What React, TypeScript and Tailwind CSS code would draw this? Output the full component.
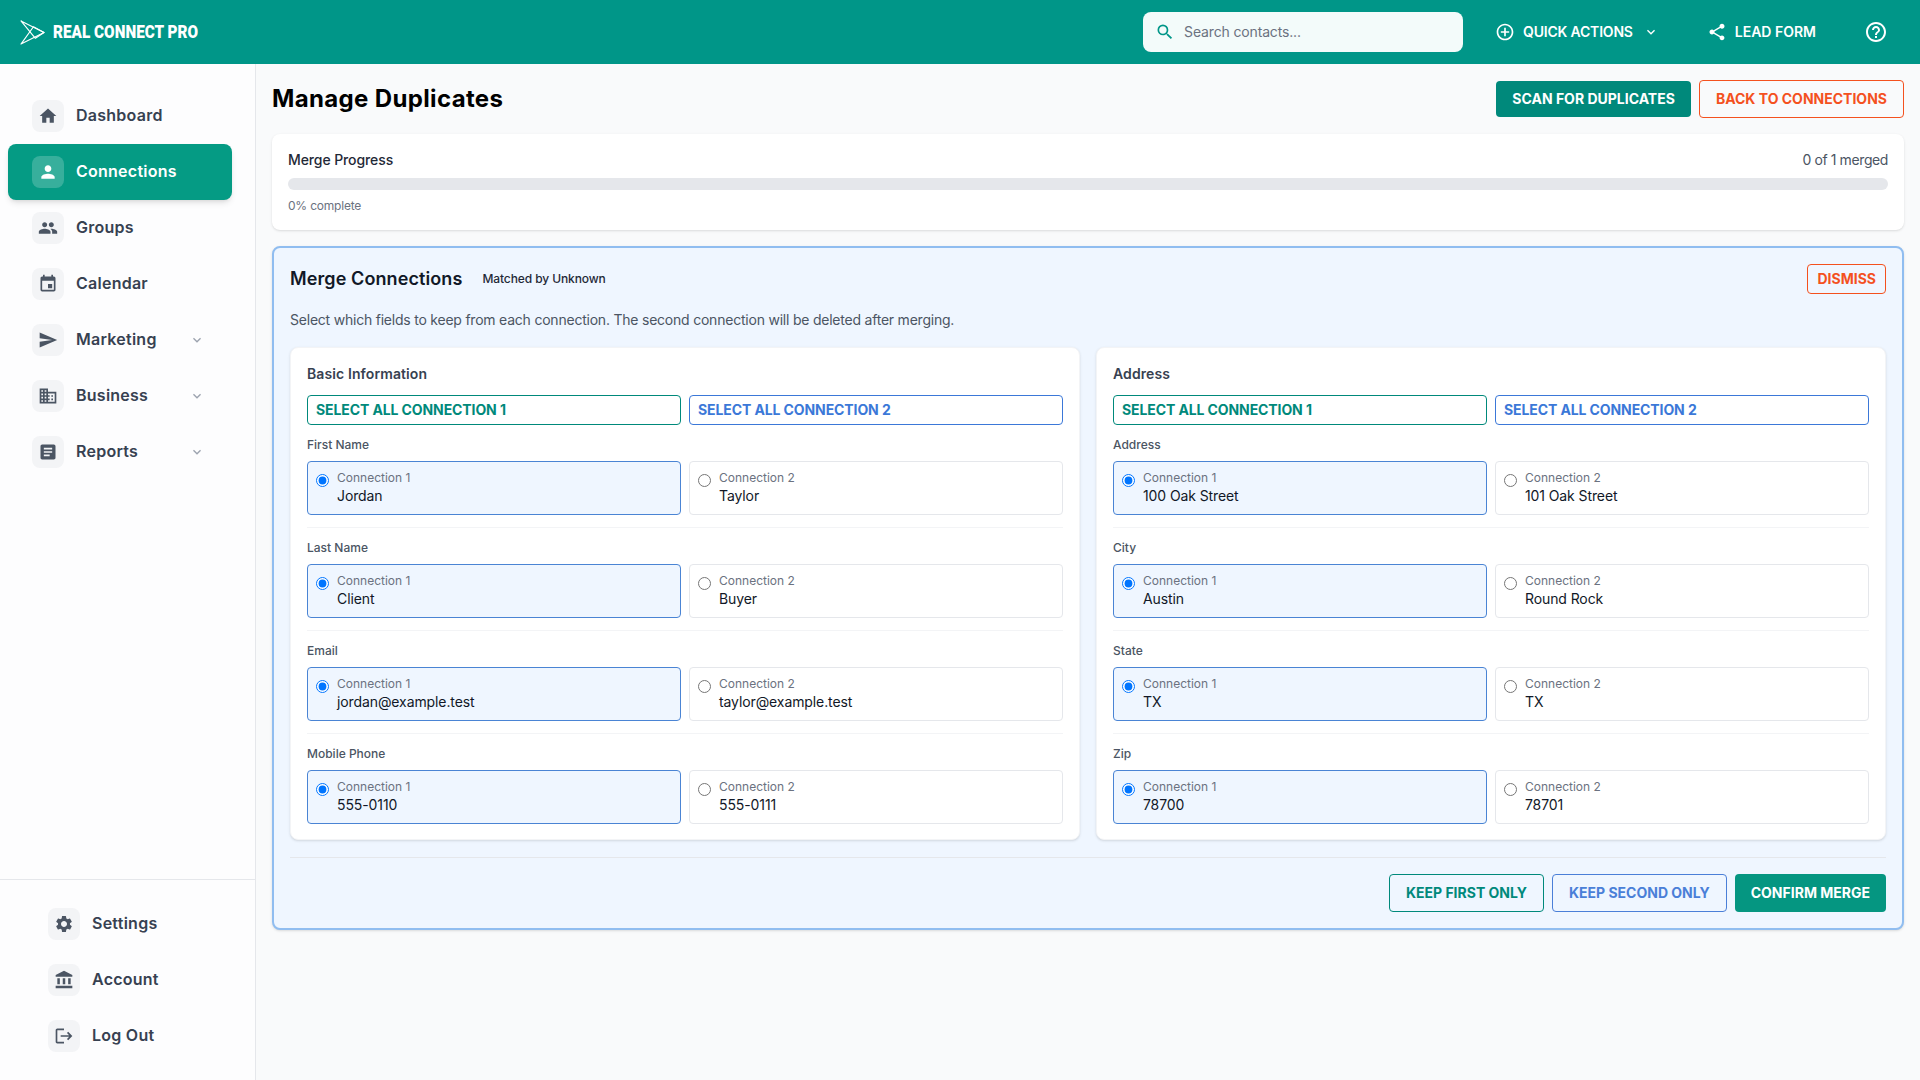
import {
  MdAccountBalance,
  MdAddCircleOutline,
  MdArticle,
  MdDomain,
  MdEvent,
  MdExpandMore,
  MdHelpOutline,
  MdHome,
  MdLogout,
  MdPeople,
  MdPerson,
  MdSearch,
  MdSend,
  MdSettings,
  MdShare,
} from "react-icons/md";
import type { IconType } from "react-icons";

const font = "font-['Inter',sans-serif]";

const mainNav: { label: string; icon: IconType; active?: boolean; more?: boolean }[] = [
  { label: "Dashboard", icon: MdHome },
  { label: "Connections", icon: MdPerson, active: true },
  { label: "Groups", icon: MdPeople },
  { label: "Calendar", icon: MdEvent },
  { label: "Marketing", icon: MdSend, more: true },
  { label: "Business", icon: MdDomain, more: true },
  { label: "Reports", icon: MdArticle, more: true },
];

const bottomNav: { label: string; icon: IconType }[] = [
  { label: "Settings", icon: MdSettings },
  { label: "Account", icon: MdAccountBalance },
  { label: "Log Out", icon: MdLogout },
];

const sections = [
  {
    title: "Basic Information",
    fields: [
      { label: "First Name", first: "Jordan", second: "Taylor" },
      { label: "Last Name", first: "Client", second: "Buyer" },
      { label: "Email", first: "jordan@example.test", second: "taylor@example.test" },
      { label: "Mobile Phone", first: "555-0110", second: "555-0111" },
    ],
  },
  {
    title: "Address",
    fields: [
      { label: "Address", first: "100 Oak Street", second: "101 Oak Street" },
      { label: "City", first: "Austin", second: "Round Rock" },
      { label: "State", first: "TX", second: "TX" },
      { label: "Zip", first: "78700", second: "78701" },
    ],
  },
];

function Logo() {
  return (
    <svg width="25" height="25" viewBox="0 0 26 26" fill="none" stroke="white" strokeWidth="1.2" strokeLinejoin="round">
      <path d="M1 1 L25 13 L16 19 Z" />
      <path d="M1 25 L25 13 L14 7 Z" />
    </svg>
  );
}

function Option({ name, title, value, selected }: { name: string; title: string; value: string; selected?: boolean }) {
  return (
    <label
      className={
        selected
          ? "flex h-[54px] items-start rounded border border-[#4a84d4] bg-[#eff6ff] px-2 pt-2"
          : "flex h-[54px] items-start rounded border border-[#e5e7eb] bg-white px-2 pt-2"
      }
    >
      <input type="radio" name={name} defaultChecked={selected} className="mt-1 mr-2 h-[13px] w-[13px]" />
      <span className="flex flex-col">
        <span className="text-xs leading-4 text-[#6b7280]">{title}</span>
        <span className="text-sm leading-5 tracking-[-0.1px] text-[#111827]">{value}</span>
      </span>
    </label>
  );
}

export default function App() {
  return (
    <div className={`flex h-screen flex-col overflow-hidden bg-[#f9fafb] ${font}`}>
      {/* Header */}
      <header className="flex h-16 shrink-0 items-center bg-[#009688] pl-5 pr-8 text-white">
        <Logo />
        <span className="mb-0.5 ml-2 inline-block origin-left scale-x-[0.85] font-['Roboto',sans-serif] text-[18px] font-black uppercase">
          Real Connect Pro
        </span>
        <div className="ml-auto flex h-10 w-[320px] items-center gap-[9px] rounded-lg bg-[#f3fbfa] px-3 text-[#009688]">
          <MdSearch size={20} />
          <span className="text-sm tracking-[-0.15px] text-[#6b7280]">Search contacts...</span>
        </div>
        <div className="ml-8 flex items-center">
          <MdAddCircleOutline size={20} />
          <span className="ml-2 text-sm font-semibold uppercase tracking-[-0.2px]">Quick Actions</span>
          <MdExpandMore size={16} className="ml-2.5" />
        </div>
        <div className="ml-12 flex items-center">
          <MdShare size={20} />
          <span className="ml-2 text-sm font-semibold uppercase">Lead Form</span>
        </div>
        <MdHelpOutline size={24} className="ml-12" />
      </header>

      <div className="flex min-h-0 flex-1">
        {/* Sidebar */}
        <aside className="flex w-[256px] shrink-0 flex-col justify-between border-r border-[#e5e7eb] bg-[#fdfdfe]">
          <nav className="flex flex-col pt-6">
            {mainNav.map((item) => (
              <div
                key={item.label}
                className={
                  item.active
                    ? "ml-2 flex h-14 w-[224px] items-center rounded-lg bg-[#059b84] pl-6 pr-[27px] text-white shadow-md"
                    : "ml-2 flex h-14 w-[224px] items-center rounded-lg pl-6 pr-[27px] text-[#374151]"
                }
              >
                <span
                  className={
                    item.active
                      ? "flex h-8 w-8 items-center justify-center rounded-lg bg-white/20"
                      : "flex h-8 w-8 items-center justify-center rounded-lg bg-[#f3f4f6] text-[#4b5563]"
                  }
                >
                  <item.icon size={20} />
                </span>
                <span className="mb-0.5 ml-3 text-base font-semibold tracking-[0.25px]">{item.label}</span>
                {item.more && <MdExpandMore size={16} className="ml-auto text-[#9ca3af]" />}
              </div>
            ))}
          </nav>
          <nav className="flex flex-col border-t border-[#e5e7eb] pb-4 pt-4">
            {bottomNav.map((item) => (
              <div key={item.label} className="ml-6 flex h-14 items-center pl-6 text-[#374151]">
                <span className="flex h-8 w-8 items-center justify-center rounded-lg bg-[#f3f4f6] text-[#4b5563]">
                  <item.icon size={20} />
                </span>
                <span className="mb-0.5 ml-3 text-base font-semibold tracking-[0.25px]">{item.label}</span>
              </div>
            ))}
          </nav>
        </aside>

        {/* Main */}
        <main className="min-w-0 flex-1 px-4 pt-4">
          <div className="flex items-center justify-between">
            <h1 className="text-2xl font-bold tracking-[0.35px] text-black">Manage Duplicates</h1>
            <div className="flex items-center gap-2">
              <button className="h-9 rounded bg-[#00897b] px-4 text-sm font-bold uppercase text-white">
                Scan for duplicates
              </button>
              <button className="h-[38px] rounded border border-[#f4511e] px-4 text-sm font-bold uppercase text-[#f4511e]">
                Back to connections
              </button>
            </div>
          </div>

          <section className="mt-4 rounded-lg bg-white px-4 pb-4 pt-4 shadow-sm">
            <div className="flex justify-between text-sm leading-5">
              <span className="font-medium tracking-[-0.1px] text-[#1f2937]">Merge Progress</span>
              <span className="tracking-[-0.4px] text-[#4b5563]">0 of 1 merged</span>
            </div>
            <div className="mt-2 h-3 rounded-full bg-[#e5e7eb]" />
            <p className="mt-2 text-xs leading-4 tracking-[-0.2px] text-[#6b7280]">0% complete</p>
          </section>

          <section className="mt-4 rounded-lg border-2 border-[#90bdf0] bg-[#eff6ff] p-4 shadow-sm">
            <div className="flex h-[30px] items-center">
              <h2 className="text-lg font-semibold tracking-[0.1px] text-[#111827]">Merge Connections</h2>
              <span className="ml-5 text-xs font-medium tracking-[-0.1px] text-[#1f2937]">Matched by Unknown</span>
              <button className="ml-auto h-[30px] rounded border border-[#f4511e] px-[9px] text-sm font-bold uppercase text-[#f4511e]">
                Dismiss
              </button>
            </div>
            <p className="mt-4 text-sm leading-5 tracking-[-0.22px] text-[#4b5563]">
              Select which fields to keep from each connection. The second connection will be deleted after merging.
            </p>

            <div className="mt-[17px] grid grid-cols-2 gap-4">
              {sections.map((section) => (
                <div key={section.title} className="rounded-lg border border-[#f3f4f6] bg-white px-4 pb-[15px] pt-4 shadow-sm">
                  <h3 className="text-sm font-semibold leading-5 tracking-[0.1px] text-[#374151]">{section.title}</h3>
                  <div className="mt-[11px] grid grid-cols-2 gap-2">
                    <button className="h-[30px] rounded border border-[#00897b] px-2 text-left text-sm font-bold uppercase tracking-[-0.1px] text-[#00897b]">
                      Select all connection 1
                    </button>
                    <button className="h-[30px] rounded border border-[#3b78d8] px-2 text-left text-sm font-bold uppercase tracking-[-0.1px] text-[#3b78d8]">
                      Select all connection 2
                    </button>
                  </div>
                  {section.fields.map((field, index) => (
                    <div
                      key={field.label}
                      className={index < section.fields.length - 1 ? "mt-3 border-b border-[#f3f4f6] pb-3" : "mt-3"}
                    >
                      <div className="text-xs font-medium leading-4 text-[#4b5563]">{field.label}</div>
                      <div className="mt-2 grid grid-cols-2 gap-2">
                        <Option name={field.label} title="Connection 1" value={field.first} selected />
                        <Option name={field.label} title="Connection 2" value={field.second} />
                      </div>
                    </div>
                  ))}
                </div>
              ))}
            </div>

            <div className="mt-[17px] flex justify-end gap-2 border-t border-[#e5e7eb] pt-4">
              <button className="h-[38px] rounded border border-[#00897b] px-4 text-sm font-bold uppercase text-[#00897b]">
                Keep first only
              </button>
              <button className="h-[38px] rounded border border-[#4a7fd8] px-4 text-sm font-bold uppercase text-[#4a7fd8]">
                Keep second only
              </button>
              <button className="h-[38px] rounded bg-[#059681] px-4 text-sm font-bold uppercase text-white">
                Confirm merge
              </button>
            </div>
          </section>
        </main>
      </div>
    </div>
  );
}
